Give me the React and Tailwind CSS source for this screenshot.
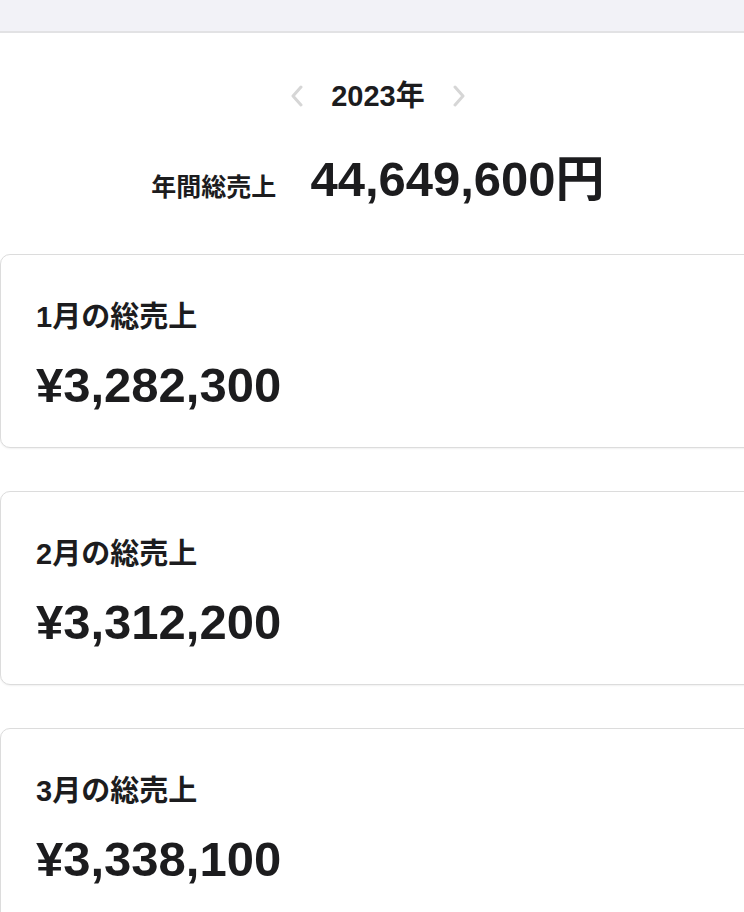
const months = [
  { label: '1月の総売上', amount: '¥3,282,300' },
  { label: '2月の総売上', amount: '¥3,312,200' },
  { label: '3月の総売上', amount: '¥3,338,100' },
];

function Chevron({ dir }) {
  return (
    <svg width="14" height="22" viewBox="0 0 14 22" fill="none" className="text-[#d6d6d6]">
      <path
        d={dir === 'left' ? 'M11 2 L3 11 L11 20' : 'M3 2 L11 11 L3 20'}
        stroke="currentColor"
        strokeWidth="3"
        strokeLinecap="round"
        strokeLinejoin="round"
      />
    </svg>
  );
}

function MonthCard({ label, amount }) {
  return (
    <div className="h-[194px] w-[770px] shrink-0 rounded-[10px] border border-[#dcdcdc] bg-white pl-[35px] pt-[46px] shadow-[0_1px_2px_rgba(0,0,0,0.06)]">
      <div className="text-[29px] font-bold leading-[32px] text-[#1c1c1e]">{label}</div>
      <div className="mt-[27px] text-[49px] font-bold leading-[50px] text-[#1c1c1e]">{amount}</div>
    </div>
  );
}

export default function App() {
  return (
    <div
      className="h-[912px] w-[744px] overflow-hidden bg-white"
      style={{ fontFamily: '"Liberation Sans", "Noto Sans CJK JP", sans-serif' }}
    >
      <div className="h-[33px] border-b-2 border-[#e2e2e4] bg-[#f2f2f7]" />

      <div className="flex flex-col items-center pt-[48px]">
        <div className="ml-[12px] flex items-center gap-[27px]">
          <Chevron dir="left" />
          <span className="text-[29px] font-bold leading-[30px] text-[#1c1c1e]">2023年</span>
          <Chevron dir="right" />
        </div>
        <div className="ml-[12px] mt-[40px] flex items-baseline gap-[34px]">
          <span className="text-[25px] font-bold leading-[30px] text-[#1c1c1e]">年間総売上</span>
          <span className="text-[49px] font-bold leading-[56px] text-[#1c1c1e]">44,649,600円</span>
        </div>
      </div>

      <div className="mt-[47px] flex flex-col gap-[43px]">
        {months.map((m) => (
          <MonthCard key={m.label} {...m} />
        ))}
      </div>
    </div>
  );
}
